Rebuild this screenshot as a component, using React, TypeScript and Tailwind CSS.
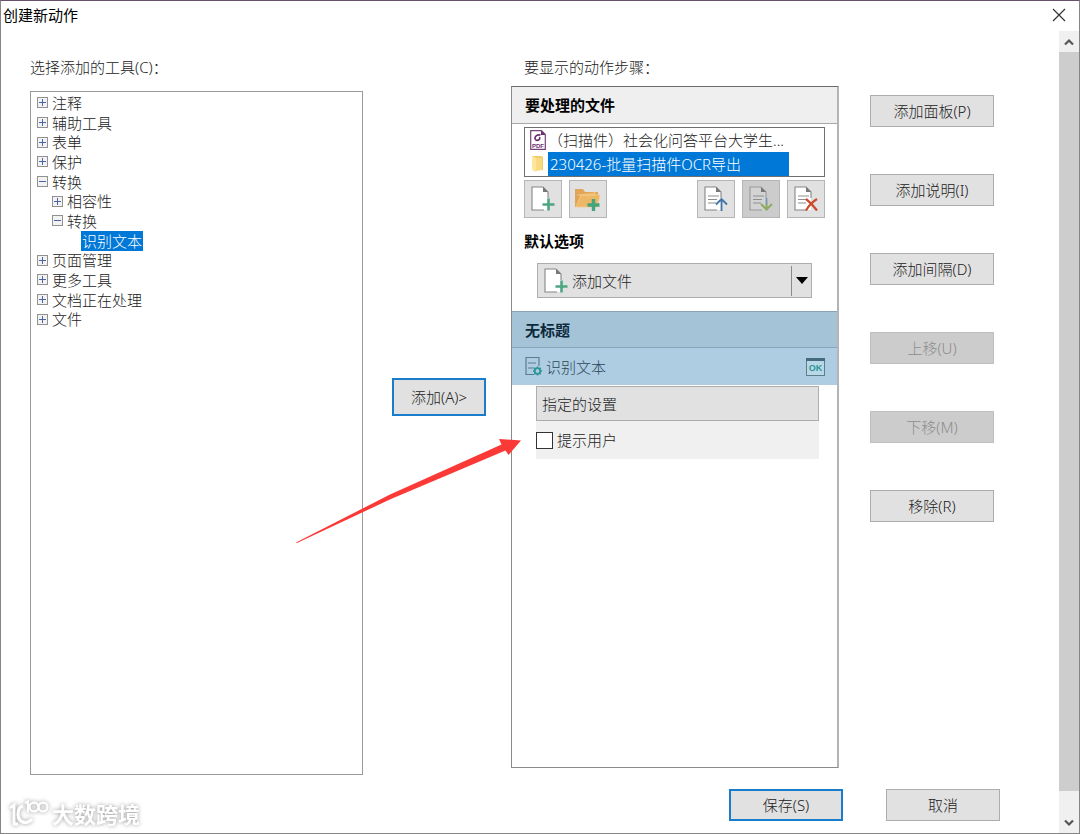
import React, { useState } from 'react';

interface TreeNode {
  id: string;
  label: string;
  level: number;
  state: 'open' | 'closed' | 'leaf';
}

const treeNodes: TreeNode[] = [
  { id: 'comment', label: '注释', level: 0, state: 'closed' },
  { id: 'assist', label: '辅助工具', level: 0, state: 'closed' },
  { id: 'form', label: '表单', level: 0, state: 'closed' },
  { id: 'protect', label: '保护', level: 0, state: 'closed' },
  { id: 'convert', label: '转换', level: 0, state: 'open' },
  { id: 'compat', label: '相容性', level: 1, state: 'closed' },
  { id: 'convert_sub', label: '转换', level: 1, state: 'open' },
  { id: 'ocr', label: '识别文本', level: 2, state: 'leaf' },
  { id: 'pages', label: '页面管理', level: 0, state: 'closed' },
  { id: 'more', label: '更多工具', level: 0, state: 'closed' },
  { id: 'process', label: '文档正在处理', level: 0, state: 'closed' },
  { id: 'file', label: '文件', level: 0, state: 'closed' },
];

const levelPadding = ['pl-[6px]', 'pl-[21px]', 'pl-[50px]'];

const sideActions = [
  { label: '添加面板(P)', disabled: false },
  { label: '添加说明(I)', disabled: false },
  { label: '添加间隔(D)', disabled: false },
  { label: '上移(U)', disabled: true },
  { label: '下移(M)', disabled: true },
  { label: '移除(R)', disabled: false },
];

const plainButton =
  'border border-[#adadad] bg-[#e1e1e1] text-[#222] disabled:border-[#bfbfbf] disabled:bg-[#cccccc] disabled:text-[#8c8c8c]';
const iconButton =
  'flex h-[38px] w-[38px] items-center justify-center border border-[#b5b5b5] bg-[#e1e1e1] disabled:bg-[#cccccc]';

function Expander({ open }: { open: boolean }) {
  return (
    <svg width="11" height="11" viewBox="0 0 11 11" className="shrink-0" shapeRendering="crispEdges">
      <rect x="0.5" y="0.5" width="10" height="10" fill="#f2f2f2" stroke="#919191" />
      <path d="M2 5.5h7" stroke="#4b63a7" />
      {!open && <path d="M5.5 2v7" stroke="#4b63a7" />}
    </svg>
  );
}

function PageShape({ lines, muted }: { lines?: boolean; muted?: boolean }) {
  return (
    <>
      <path d="M1 1h11l5 5v18H1z" fill={muted ? '#d3d3d3' : '#fff'} />
      <path d="M17 12V6l-5-5H1v23h12" fill="none" stroke={muted ? '#999' : '#868686'} strokeWidth="1.1" />
      <path d="M12 1v5h5z" fill="#777" />
      {lines && <path d="M4 10h11M4 13.5h9M4 17h8" stroke="#8f8f8f" strokeWidth="1.1" />}
    </>
  );
}

function AddFileIcon() {
  return (
    <svg width="24" height="26" viewBox="0 0 24 26">
      <PageShape />
      <path d="M17.5 12.500v12M11.500 18.500h12" stroke="#4da681" strokeWidth="2.600" />
    </svg>
  );
}

function AddFolderIcon() {
  return (
    <svg width="28" height="26" viewBox="0 0 28 26">
      <path d="M1 3h8l2 3h13v5H8L3 21H1z" fill="#e0a556" />
      <path d="M3 9h18v-3M2 21L7 9h19l-3 12z" fill="#edb765" stroke="#f3cd8e" strokeWidth="0.8" />
      <path d="M19.5 13v12M13.5 19h12" stroke="#46a37c" strokeWidth="3.4" />
    </svg>
  );
}

function MoveUpIcon() {
  return (
    <svg width="24" height="26" viewBox="0 0 24 26">
      <PageShape lines />
      <path d="M17.5 25V13.500M12 18.500l5.500-5.500 5.500 5.500" fill="none" stroke="#4174a8" strokeWidth="1.800" />
    </svg>
  );
}

function MoveDownIcon() {
  return (
    <svg width="24" height="26" viewBox="0 0 24 26">
      <PageShape lines muted />
      <path d="M17.5 12v7" stroke="#7796b4" strokeWidth="1.8" />
      <path d="M17.5 18v5M12 18l5.5 5.5L23 18" fill="none" stroke="#8faa63" strokeWidth="2" />
    </svg>
  );
}

function RemoveIcon() {
  return (
    <svg width="24" height="26" viewBox="0 0 24 26">
      <PageShape lines />
      <path d="M12 13c4 3 7 6 11 11.500M23 13c-4 2.500-8 6-11 11.500" fill="none" stroke="#cc4a2c" strokeWidth="2.200" />
    </svg>
  );
}

function PdfIcon() {
  return (
    <svg width="16" height="20" viewBox="0 0 16 20" className="shrink-0">
      <path d="M0.7 0.7h10.800l3.800 3.800v14.800H0.700z" fill="#fff" stroke="#774378" strokeWidth="1.200" />
      <path d="M11 0.5V5h4.500z" fill="#6a2c6e" />
      <path
        d="M10.500 5C6.500 4.500 4.800 6.500 5 8.500c.2 2.200 3.500 2.400 4.500.6.500-.9.300-1.600-.3-2"
        fill="none"
        stroke="#6a2c6e"
        strokeWidth="1.700"
      />
      <text x="8" y="17.8" textAnchor="middle" fontSize="6" fontWeight="700" fontFamily="Liberation Sans, sans-serif" fill="#6a2c6e">
        PDF
      </text>
    </svg>
  );
}

function FolderIcon() {
  return (
    <svg width="16" height="18" viewBox="0 0 16 18" className="shrink-0">
      <path d="M2 1h9l2 1v13H5z" fill="#f0cd6a" />
      <path d="M2 1l4 2v14l-4-2z" fill="#ffe69c" />
      <path d="M6 3h6v12l-6 1z" fill="#f8da82" />
    </svg>
  );
}

function RecognizeIcon() {
  return (
    <svg width="18" height="21" viewBox="0 0 18 21" className="shrink-0">
      <path d="M14 10V1.500H1V18.500h8" fill="none" stroke="#5c7d90" strokeWidth="1.200" />
      <path d="M3 7h8M3 12h6" stroke="#5c7d90" strokeWidth="1.200" />
      <circle cx="12.500" cy="15" r="2.800" fill="none" stroke="#2d9599" strokeWidth="1.800" />
      <path
        d="M12.500 10.500v2M12.500 17.500v2M8 15h2M15 15h2M9.300 11.800l1.400 1.400M14.300 16.800l1.400 1.400M15.700 11.800l-1.400 1.400M10.700 16.800l-1.400 1.400"
        stroke="#2d9599"
        strokeWidth="1.500"
      />
    </svg>
  );
}

function OkIcon() {
  return (
    <svg width="19" height="18" viewBox="0 0 19 18">
      <rect x="0.5" y="0.5" width="18" height="17" fill="#b9d8e5" stroke="#5c7d90" />
      <path d="M0 1.500h19" stroke="#456b80" strokeWidth="3" />
      <text x="9.5" y="13" textAnchor="middle" fontSize="9" fontWeight="700" fontFamily="Liberation Sans, sans-serif" fill="#2d9599">
        OK
      </text>
    </svg>
  );
}

function Watermark() {
  return (
    <div className="pointer-events-none absolute bottom-[4px] left-[8px] flex items-center gap-[3px] drop-shadow-[0_0_2px_#999]">
      <svg width="40" height="30" viewBox="0 0 40 30" fill="none" stroke="#fff">
        <path d="M1 9l4-3v19h4" strokeWidth="2.8" />
        <path d="M14 7c-4 1-5 4-5 8 0 9 9 11 14 5" strokeWidth="3.2" />
        <path d="M16 4l3-1.500v11" strokeWidth="2.4" />
        <circle cx="25" cy="8" r="4.4" strokeWidth="2.2" />
        <circle cx="34" cy="8" r="4.4" strokeWidth="2.2" />
      </svg>
      <span className="text-[22px] leading-[30px] font-bold text-white">大数跨境</span>
    </div>
  );
}

export default function App() {
  const [selected, setSelected] = useState('ocr');
  const [promptUser, setPromptUser] = useState(false);

  return (
    <div className="relative flex min-h-screen flex-col border border-[#858585] border-t-[#66506a] bg-white font-['Noto_Sans','Noto_Sans_CJK_SC',sans-serif] text-[15px] leading-[20px] font-light text-[#222]">
      <header className="flex h-[28px] items-center justify-between pr-[13px] pl-[2px]">
        <h1 className="font-normal text-black">创建新动作</h1>
        <button aria-label="关闭">
          <svg width="14" height="14" viewBox="0 0 14 14">
            <path d="M1 1l12 12M13 1L1 13" stroke="#333" strokeWidth="1.2" />
          </svg>
        </button>
      </header>

      <div className="flex flex-1">
        <div className="flex flex-1 gap-[29px] pl-[29px]">
          <section className="flex flex-[333] flex-col pt-[26px] pb-[58px]">
            <h2 id="tools" className="mb-[12px] leading-[24px]">选择添加的工具(C)：</h2>
            <div className="flex-1 border border-[#9a9a9a] pt-px">
              <ul role="tree" aria-labelledby="tools" className="grid h-[236px] auto-rows-fr">
                {treeNodes.map((node) => (
                  <li
                    key={node.id}
                    role="treeitem"
                    aria-selected={selected === node.id}
                    onClick={() => setSelected(node.id)}
                    className={`flex items-center gap-[3px] ${levelPadding[node.level]}`}
                  >
                    {node.state !== 'leaf' && <Expander open={node.state === 'open'} />}
                    <span className={`px-[1px] ${selected === node.id ? 'bg-[#0078d7] text-white' : ''}`}>{node.label}</span>
                  </li>
                ))}
              </ul>
            </div>
          </section>

          <section className="flex flex-[667] flex-col pb-[12px]">
            <div className="flex flex-1">
              <button className="mr-[25px] mb-[4px] h-[38px] w-[94px] shrink-0 self-center border-2 border-[#1a7dcc] bg-[#e1e1e1] text-[#222]">
                添加(A)&gt;
              </button>

              <div className="flex flex-1 flex-col pt-[26px]">
                <h2 className="mb-[7px] pl-[13px] leading-[24px]">要显示的动作步骤：</h2>
                <div className="flex-1 border border-r-2 border-[#8a8a8a] border-t-[#6a6a6a] border-r-[#b4b4b4]">
                  <h3 className="flex h-[37px] items-center border-b border-[#a8a8a8] bg-[#efefef] px-[13px] font-bold text-black">要处理的文件</h3>

                  <div className="px-[12px] pt-[3px]">
                    <ul role="listbox" aria-label="要处理的文件" className="border border-[#707070]">
                      <li role="option" aria-selected={false} className="flex h-[24px] items-center gap-[2px] pl-[5px]">
                        <PdfIcon />
                        <span className="truncate">（扫描件）社会化问答平台大学生...</span>
                      </li>
                      <li role="option" aria-selected className="flex h-[24px] items-center pl-[5px]">
                        <FolderIcon />
                        <span className="mr-[35px] ml-[2px] flex-1 truncate bg-[#0078d7] pl-[2px] leading-[24px] text-white">
                          230426-批量扫描件OCR导出
                        </span>
                      </li>
                    </ul>

                    <div className="mt-[3px] flex gap-[7px]">
                      <button className={iconButton} aria-label="添加文件"><AddFileIcon /></button>
                      <button className={iconButton} aria-label="添加文件夹"><AddFolderIcon /></button>
                      <button className={`ml-auto ${iconButton}`} aria-label="上移文件"><MoveUpIcon /></button>
                      <button className={iconButton} aria-label="下移文件" disabled><MoveDownIcon /></button>
                      <button className={iconButton} aria-label="移除文件"><RemoveIcon /></button>
                    </div>

                    <h3 className="mt-[13px] font-bold text-black">默认选项</h3>
                    <div className="mt-[12px] mr-[13px] ml-[13px] flex h-[35px] items-center border border-[#adadad] bg-[#e1e1e1]">
                      <button className="flex h-full flex-1 items-center gap-[4px] pl-[6px]">
                        <AddFileIcon />
                        添加文件
                      </button>
                      <button className="flex h-[30px] w-[20px] items-center justify-center border-l border-[#8a8a8a]" aria-label="更多选项">
                        <svg width="12" height="7" viewBox="0 0 12 7">
                          <path d="M0 0h12L6 7z" fill="#000" />
                        </svg>
                      </button>
                    </div>
                  </div>

                  <h3 className="mt-[13px] flex h-[37px] items-center border-y border-[#86a5b8] bg-[#a4c3d6] px-[13px] font-bold text-[#0c2a3c]">无标题</h3>
                  <div className="flex h-[37px] items-center gap-[3px] bg-[#aecde2] pr-[12px] pl-[13px] text-[#2c4658]">
                    <RecognizeIcon />
                    <span className="flex-1">识别文本</span>
                    <OkIcon />
                  </div>
                  <div className="mt-px mr-[18px] ml-[24px] bg-[#f0f0f0]">
                    <button className={`h-[35px] w-full pl-[5px] text-left ${plainButton}`}>指定的设置</button>
                    <label className="flex h-[38px] items-center gap-[4px]">
                      <input
                        type="checkbox"
                        checked={promptUser}
                        onChange={(e) => setPromptUser(e.target.checked)}
                        className="h-[17px] w-[17px] appearance-none border border-[#333] bg-white checked:bg-[#0078d7]"
                      />
                      提示用户
                    </label>
                  </div>
                </div>
              </div>

              <div className="mr-[65px] ml-[31px] flex w-[124px] shrink-0 flex-col gap-[47px] pt-[66px]">
                {sideActions.map((action) => (
                  <button key={action.label} disabled={action.disabled} className={`h-[32px] ${plainButton}`}>
                    {action.label}
                  </button>
                ))}
              </div>
            </div>

            <div className="mt-[21px] mr-[59px] flex justify-end gap-[43px]">
              <button className="h-[32px] w-[114px] border-2 border-[#1a7dcc] bg-[#e1e1e1]">保存(S)</button>
              <button className={`h-[32px] w-[114px] ${plainButton}`}>取消</button>
            </div>
          </section>
        </div>

        <div className="mt-[2px] flex w-[20px] shrink-0 flex-col bg-[#f0f0f0]">
          <button className="flex h-[21px] items-center justify-center" aria-label="向上滚动">
            <svg width="10" height="8" viewBox="0 0 10 8">
              <path d="M1 6.500l4-4 4 4" fill="none" stroke="#555" strokeWidth="2.200" />
            </svg>
          </button>
          <div className="mb-[21px] flex-1 bg-[#cdcdcd]" />
          <button className="flex h-[21px] items-center justify-center" aria-label="向下滚动">
            <svg width="10" height="8" viewBox="0 0 10 8">
              <path d="M1 1.500l4 4 4-4" fill="none" stroke="#555" strokeWidth="2.200" />
            </svg>
          </button>
        </div>
      </div>

      <svg className="pointer-events-none absolute top-[436px] left-[294px]" width="226" height="107" viewBox="0 0 226 107">
        <path d="M1 105.500L95 57.500 206.500 7.500 204 2l22 1.500L213.500 18l-3-4.500L96 62 2 106z" fill="#fb3a38" />
      </svg>

      <Watermark />
    </div>
  );
}
